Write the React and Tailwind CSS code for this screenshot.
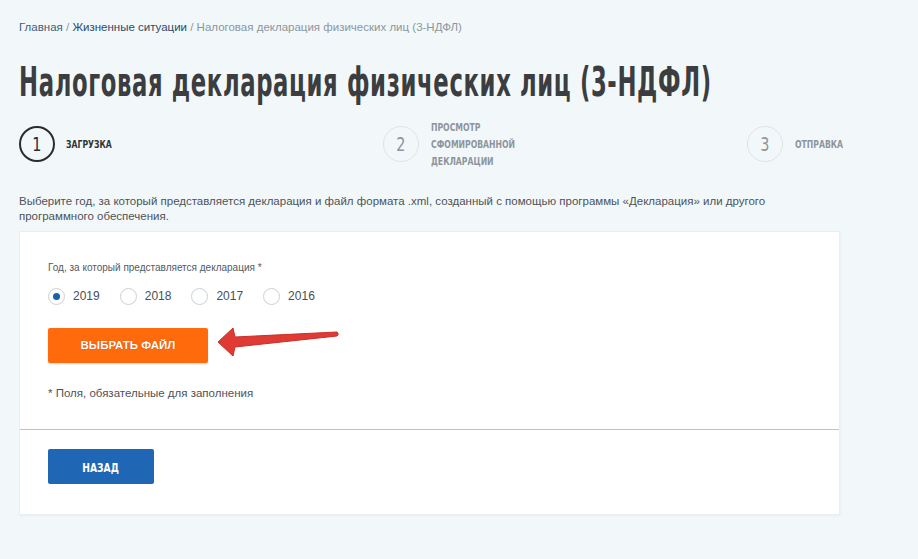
import { useState } from 'react'

const cond = { fontFamily: '"DejaVu Sans Condensed", "DejaVu Sans", sans-serif' }

export default function App() {
  const [year, setYear] = useState('2019')
  const years = ['2019', '2018', '2017', '2016']

  return (
    <div className="min-h-[559px] overflow-hidden bg-[#f2f8fa] font-['Liberation_Sans',Arial,sans-serif] pl-[19px] pr-[78px] pt-[19px] pb-[44px]">
      {/* Breadcrumbs */}
      <div className="text-[11.5px] leading-[16px] text-[#8c969e]">
        <span className="text-[#3f5d7a]">Главная</span>
        <span> / </span>
        <span className="text-[#2e4966]">Жизненные ситуации</span>
        <span> / Налоговая декларация физических лиц (3-НДФЛ)</span>
      </div>

      {/* Title */}
      <h1 className="mt-[24px] h-[46px] whitespace-nowrap overflow-hidden">
        <span
          style={cond}
          className="inline-block origin-left scale-x-[0.632] text-[40px] leading-[46px] font-bold text-[#3b3d40] tracking-[1px]"
        >
          Налоговая декларация физических лиц (3-НДФЛ)
        </span>
      </h1>

      {/* Steps */}
      <div className="mt-[12px] h-[54px] flex items-center">
        <div className="w-[364px] shrink-0 flex items-center gap-[11px]">
          <StepCircle n="1" active />
          <StepLabel dark>ЗАГРУЗКА</StepLabel>
        </div>
        <div className="w-[364px] shrink-0 flex items-center gap-[12px]">
          <StepCircle n="2" />
          <StepLabel>
            ПРОСМОТР<br />СФОМИРОВАННОЙ<br />ДЕКЛАРАЦИИ
          </StepLabel>
        </div>
        <div className="shrink-0 flex items-center gap-[12px]">
          <StepCircle n="3" />
          <StepLabel>ОТПРАВКА</StepLabel>
        </div>
      </div>

      {/* Description */}
      <p className="mt-[23px] text-[11.5px] leading-[15px] text-[#4e5257]">
        Выберите год, за который представляется декларация и файл формата .xml, созданный с помощью программы «Декларация» или другого программного обеспечения.
      </p>

      {/* Card */}
      <div className="mt-[7px] w-[821px] bg-white border border-[#e8eef1] shadow-[1px_1px_2px_rgba(0,0,0,0.04)]">
        <div className="pl-[28px] pt-[29px] pb-[28px]">
          <div className="text-[10px] leading-[14px] text-[#555a5f]">Год, за который представляется декларация *</div>

          <div className="mt-[12px] flex items-center">
            {years.map(y => (
              <label key={y} className="flex items-center mr-[20px] cursor-pointer" onClick={() => setYear(y)}>
                <span className="w-[17px] h-[17px] rounded-full border border-[#c9cfd4] bg-white flex items-center justify-center">
                  {year === y && <span className="w-[7px] h-[7px] rounded-full bg-[#1d5fa8]" />}
                </span>
                <span className="ml-[8px] text-[12px] text-[#4a4e53]">{y}</span>
              </label>
            ))}
          </div>

          <div className="relative mt-[23px] h-[35px]">
            <button className="w-[160px] h-[35px] bg-[#ff6a0c] rounded-[2px] text-white text-[11.5px] font-bold shadow-[0_1px_2px_rgba(0,0,0,0.15)] [text-shadow:0_0_1px_rgba(120,40,0,0.6)]">
              ВЫБРАТЬ ФАЙЛ
            </button>
            {/* annotation arrow */}
            <svg
              className="absolute left-[168px] top-[-5px]"
              width="130"
              height="40"
              viewBox="0 0 130 40"
            >
              <path
                d="M2 19 L17 5 L19 14 L121 9 Q123.5 11 121 13 L19 24 L17 33 Z"
                fill="#e03a35"
                stroke="#c9302b"
                strokeWidth="1"
                strokeLinejoin="round"
              />
            </svg>
          </div>

          <div className="mt-[23px] text-[11.5px] leading-[15px] text-[#4e5257]">* Поля, обязательные для заполнения</div>
        </div>

        <div className="h-[1px] bg-[#bfc3c6]" />

        <div className="pl-[28px] pt-[19px] pb-[30px]">
          <button className="w-[106px] h-[35px] bg-[#1f67b4] rounded-[2px]">
            <span style={cond} className="inline-block scale-x-[0.85] text-white text-[12px] font-bold">
              НАЗАД
            </span>
          </button>
        </div>
      </div>
    </div>
  )
}

function StepCircle({ n, active }) {
  return (
    <div
      className={`w-[36px] h-[36px] shrink-0 rounded-full flex items-center justify-center ${
        active ? 'border-2 border-[#2a2c2f] text-[#2a2c2f]' : 'border border-[#dfe3e6] text-[#8d949a]'
      }`}
    >
      <span style={cond} className="inline-block scale-x-[0.8] text-[20px] leading-[20px]">{n}</span>
    </div>
  )
}

function StepLabel({ children, dark }) {
  return (
    <span
      style={cond}
      className={`inline-block origin-left scale-x-[0.78] whitespace-nowrap text-[11px] leading-[17px] font-bold ${
        dark ? 'text-[#2f3236]' : 'text-[#8d949a]'
      }`}
    >
      {children}
    </span>
  )
}
